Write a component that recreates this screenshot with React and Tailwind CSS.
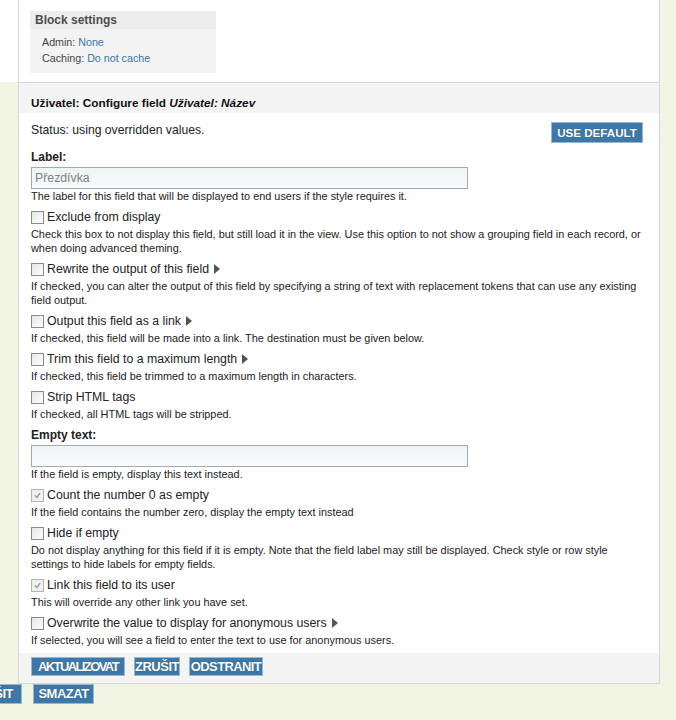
const fieldOptions = [
  {
    label: "Exclude from display",
    help: "Check this box to not display this field, but still load it in the view. Use this option to not show a grouping field in each record, or when doing advanced theming.",
  },
  {
    label: "Rewrite the output of this field",
    more: true,
    help: "If checked, you can alter the output of this field by specifying a string of text with replacement tokens that can use any existing field output.",
  },
  {
    label: "Output this field as a link",
    more: true,
    help: "If checked, this field will be made into a link. The destination must be given below.",
  },
  {
    label: "Trim this field to a maximum length",
    more: true,
    help: "If checked, this field be trimmed to a maximum length in characters.",
  },
  {
    label: "Strip HTML tags",
    help: "If checked, all HTML tags will be stripped.",
  },
];

const emptyOptions = [
  {
    label: "Count the number 0 as empty",
    checked: true,
    help: "If the field contains the number zero, display the empty text instead",
  },
  {
    label: "Hide if empty",
    help: "Do not display anything for this field if it is empty. Note that the field label may still be displayed. Check style or row style settings to hide labels for empty fields.",
  },
  {
    label: "Link this field to its user",
    checked: true,
    help: "This will override any other link you have set.",
  },
  {
    label: "Overwrite the value to display for anonymous users",
    more: true,
    help: "If selected, you will see a field to enter the text to use for anonymous users.",
  },
];

function Checkbox({ checked }) {
  if (checked) {
    return (
      <span className="flex h-[13px] w-[13px] shrink-0 items-center justify-center border border-[#b5b5b5] bg-[#f0f0f0]">
        <svg width="7" height="7" viewBox="0 0 7 7">
          <path d="M1 3.5 L3 5.5 L6 1.2" stroke="#9a9a9a" strokeWidth="1.4" fill="none" />
        </svg>
      </span>
    );
  }
  return (
    <span className="h-[13px] w-[13px] shrink-0 border border-[#8a8a8a] bg-gradient-to-br from-[#e6e6e6] to-white" />
  );
}

function Option({ item }) {
  return (
    <div className="mb-[6px]">
      <div className="flex h-[16px] items-center text-[12.3px] text-[#222]">
        <Checkbox checked={item.checked} />
        <span className="ml-[3px]">{item.label}</span>
        {item.more && (
          <svg className="ml-[5px]" width="6" height="10" viewBox="0 0 6 10">
            <path d="M0 0 L6 5 L0 10 Z" fill="#555" />
          </svg>
        )}
      </div>
      <p className="mt-[2px] text-[10.9px] leading-[14px] text-[#222]">{item.help}</p>
    </div>
  );
}

function BlueButton({ children, className }) {
  return (
    <button
      type="button"
      className={
        "flex items-center justify-center whitespace-nowrap border border-[#a3b4c2] bg-[#3b79ab] font-bold text-white [text-shadow:0_0_1px_rgba(0,0,0,0.4)] " +
        className
      }
    >
      {children}
    </button>
  );
}

export default function App() {
  return (
    <div className="min-h-screen bg-[#f3f5e4] font-['Liberation_Sans',Arial,sans-serif]">
      <div className="w-[660px] border-r border-[#d5d8d5] bg-white">
        <div className="ml-[18px] h-[82px] border-l border-[#d5d8d5] pl-[11px] pt-[11px]">
          <div className="w-[186px] bg-[#f3f3f3] pb-[7px]">
            <div className="bg-[#ededed] px-[5px] pb-[2px] pt-[2px] text-[12px] font-bold leading-[14px] text-[#4d4d4d]">
              Block settings
            </div>
            <div className="mt-[5px] pl-[12px] text-[10.7px] leading-[16px] text-[#444]">
              <div>
                Admin: <span className="text-[#3a74a8]">None</span>
              </div>
              <div>
                Caching: <span className="text-[#3a74a8]">Do not cache</span>
              </div>
            </div>
          </div>
        </div>
      </div>

      <div className="ml-[18px] w-[642px] border-x border-b border-t border-[#d5d8d5] border-t-[#d0dada] bg-white">
        <div className="bg-[#f4f4f4] pb-[3px] pl-[12px] pt-[13px] text-[11.8px] font-bold leading-[14px] text-[#111]">
          Uživatel: Configure field <em>Uživatel: Název</em>
        </div>

        <div className="pl-[12px] pr-[16px] pt-[9px]">
          <div className="mb-[6px] flex items-start justify-between">
            <span className="text-[12.2px] leading-[16px] text-[#222]">Status: using overridden values.</span>
            <BlueButton className="h-[21px] w-[92px] text-[11.6px]">USE DEFAULT</BlueButton>
          </div>

          <div className="mb-[6px]">
            <div className="h-[16px] text-[12px] font-bold leading-[16px] text-[#222]">Label:</div>
            <div className="mt-[2px] flex h-[22px] w-[437px] items-center border border-[#a2adb3] bg-gradient-to-b from-[#eef3f6] to-[#f8fbfc] px-[3px] text-[12.3px] text-[#808080]">
              Přezdívka
            </div>
            <p className="text-[10.9px] leading-[14px] text-[#222]">
              The label for this field that will be displayed to end users if the style requires it.
            </p>
          </div>

          {fieldOptions.map((item) => (
            <Option key={item.label} item={item} />
          ))}

          <div className="mb-[6px]">
            <div className="h-[16px] text-[12px] font-bold leading-[16px] text-[#222]">Empty text:</div>
            <div className="mt-[2px] h-[22px] w-[437px] border border-[#a2adb3] bg-gradient-to-b from-[#eef3f6] to-[#f8fbfc]" />
            <p className="text-[10.9px] leading-[14px] text-[#222]">If the field is empty, display this text instead.</p>
          </div>

          {emptyOptions.map((item) => (
            <Option key={item.label} item={item} />
          ))}
        </div>

        <div className="flex h-[30px] items-start gap-[9px] bg-[#f4f4f4] pl-[12px] pt-[4px]">
          <BlueButton className="h-[19px] w-[94px] text-[13px] tracking-[-1.6px]">AKTUALIZOVAT</BlueButton>
          <BlueButton className="h-[19px] w-[46px] text-[13px] tracking-[-0.5px]">ZRUŠIT</BlueButton>
          <BlueButton className="h-[19px] w-[74px] text-[13px] tracking-[-0.6px]">ODSTRANIT</BlueButton>
        </div>
      </div>

      <div className="flex gap-[11px] overflow-hidden">
        <BlueButton className="-ml-[40px] h-[20px] w-[62px] text-[13px] tracking-[-0.5px]">ZRUŠIT</BlueButton>
        <BlueButton className="h-[20px] w-[61px] text-[13px] tracking-[-0.5px]">SMAZAT</BlueButton>
      </div>
    </div>
  );
}
